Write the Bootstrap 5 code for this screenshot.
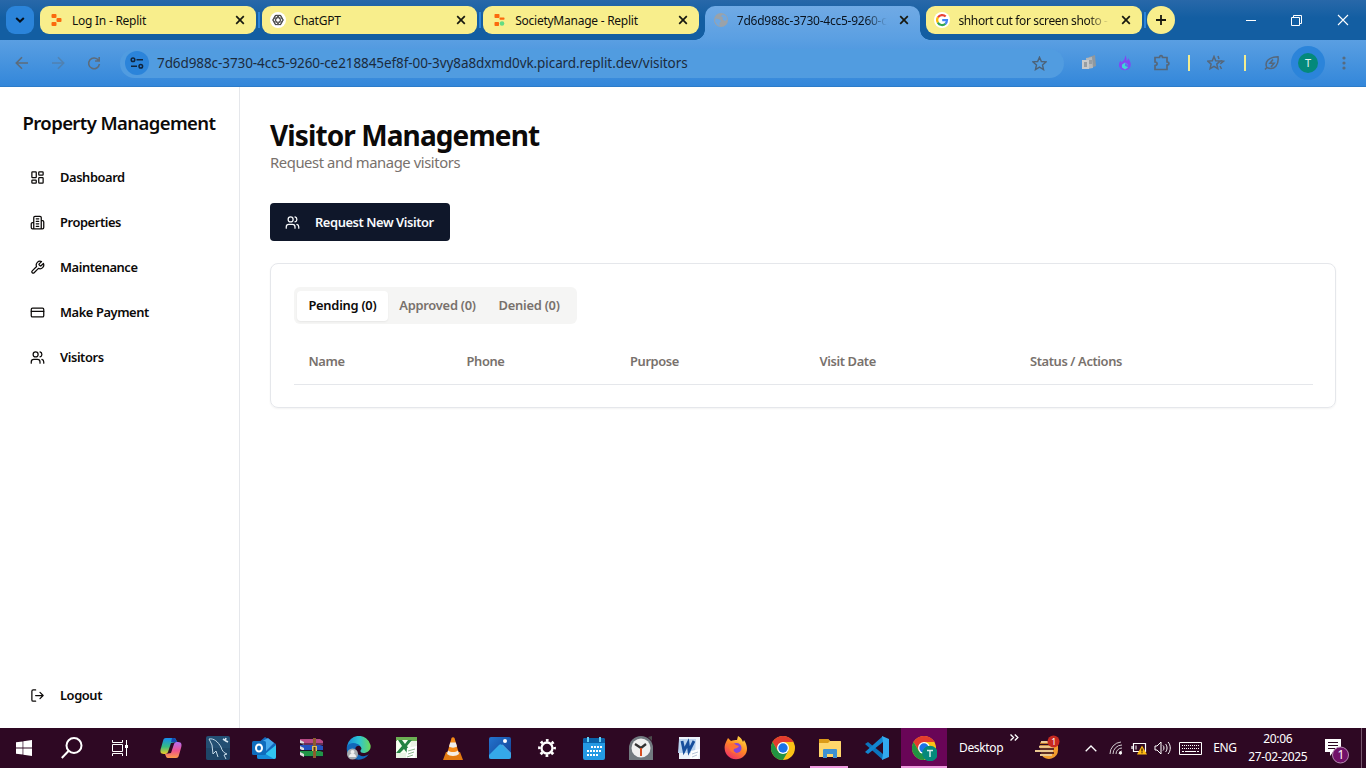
<!DOCTYPE html>
<html lang="en">
<head>
<meta charset="utf-8">
<meta name="viewport" content="width=device-width, initial-scale=1">
<title>Visitor Management</title>
<link href="https://cdn.jsdelivr.net/npm/bootstrap@5.3.0/dist/css/bootstrap.min.css" rel="stylesheet">
<style>
  body{font-family:"Noto Sans","Open Sans",sans-serif;color:#0c0a09;height:768px;overflow:hidden;font-size:13px;line-height:1.2}
  svg{display:block;flex:none}
  .lucide{width:15px;height:15px;fill:none;stroke:currentColor;stroke-width:2;stroke-linecap:round;stroke-linejoin:round}
  /* browser tab strip */
  .tabstrip{height:40px;padding:6px 0 0 6px;background:linear-gradient(#2868a9,#135ea2 18px);gap:6px;font-size:12px;letter-spacing:-.25px}
  .tabsearch{width:28px;height:28px;border-radius:9px;background:#2b84da}
  .pill-tab{width:215.6px;height:28px;border-radius:9px;background:#f8ee8c;color:#11110c;padding:0 11px 0 8px;position:relative;white-space:nowrap}
  .pill-tab.sep::after{content:"";position:absolute;right:-4px;top:6px;width:2px;height:16px;background:#2b84da}
  .pill-tab.current{height:34px;background:linear-gradient(#70aae5,#5a9fe2);border-radius:10px 10px 0 0;padding-bottom:6px;color:#0a1420}
  .pill-tab.current::before,.pill-tab.current::after{content:"";position:absolute;bottom:0;width:10px;height:10px}
  .pill-tab.current::before{left:-10px;background:radial-gradient(circle at 0 0,transparent 9.5px,#5a9fe2 10px)}
  .pill-tab.current::after{right:-10px;background:radial-gradient(circle at 100% 0,transparent 9.5px,#5a9fe2 10px)}
  .tab-label{flex:1;margin:1px 12px 0 8px;line-height:20px}
  .fade-label{-webkit-mask-image:linear-gradient(90deg,#000 86%,transparent)}
  .tight{letter-spacing:-.36px}
  .newtab{width:28px;height:28px;border-radius:50%;background:#f8ee8c;margin-left:-1px}
  .winctl{gap:35px;padding-right:17px;height:28px}
  /* address row */
  .toolbar{height:47px;background:linear-gradient(#5a9fe2,#3387da);border-bottom:1px solid #2d7cc9;color:#56677a}
  .omnibox{width:944px;height:29px;border-radius:15px;background:#519ce0;margin-left:18px;padding:0 17px 0 5px}
  .siteinfo{width:24px;height:24px;border-radius:50%;background:#2b84da}
  .url{font-size:13.5px;color:#1b2b3d;margin-left:8px;letter-spacing:-.085px}
  .ext-bar{width:2px;height:16px;background:#f3ec8f}
  .avatar-ring{width:34px;height:34px;border-radius:50%;background:#2b84da}
  .avatar-t{width:20px;height:20px;border-radius:50%;background:#04897b;color:#e5f5f2;font-size:11px}
  /* application */
  .app-view{height:641px;background:#fff}
  .side{width:240px;border-right:1px solid #e5e7eb;padding:22px 22px 14px}
  .brand{font-size:18.5px;font-weight:600;letter-spacing:-.6px;line-height:28px;white-space:nowrap;margin:0 0 22px .5px}
  .side .nav{gap:7.5px}
  .side .nav-link{height:37.5px;padding:0 7.5px;gap:15.5px;color:#0c0a09;font-size:12.9px;font-weight:600;letter-spacing:-.42px}
  .content-area{padding:30px}
  .page-title{font-size:28px;font-weight:700;letter-spacing:-.9px;line-height:34px;margin:1px 0 -1px}
  .muted{color:#78716c}
  .sub{font-size:14.8px;letter-spacing:-.42px;line-height:22px}
  .btn-request{background:#0f172a;color:#f8fafc;width:180px;height:38px;border-radius:4px;margin-top:30px;padding:0 14px;gap:15px;font-size:12.9px;font-weight:600;letter-spacing:-.42px;white-space:nowrap;line-height:19px}
  .panel{margin-top:22px;height:145px;border:1px solid #e5e7eb;border-radius:8px;box-shadow:0 1px 2px rgba(0,0,0,.05);padding:23px 22px 0 23px}
  .seg{width:283px;height:37px;border-radius:6px;background:#f5f5f4;padding:3.5px 3px;font-size:12.9px;font-weight:600;letter-spacing:-.25px}
  .seg .nav-link{height:30px;padding:0 11.4px;color:#78716c;white-space:nowrap}
  .seg .nav-link.active{background:#fff;color:#0c0a09;border-radius:4px;box-shadow:0 1px 2px rgba(0,0,0,.06)}
  .vtable{table-layout:fixed;margin:15px 0 0;font-size:12.9px;letter-spacing:-.38px}
  .vtable th{height:45px;padding:1px 14.5px 0;vertical-align:middle;color:#78716c;font-weight:600;border-bottom:1px solid #e5e7eb}
  /* desktop taskbar */
  .taskbar{height:40px;background:#2e0823;color:#fff;font-size:12px;letter-spacing:-.35px;white-space:nowrap}
  .cell{width:47.1px;height:40px}
  .w48{width:48px}
  .running{position:relative}
  .running::after{content:"";position:absolute;left:4px;right:5px;bottom:0;height:2px;background:#ef9adf}
  .focused{background:#690557}
  .focused::after{left:0;right:0}
  .peek{width:5px;height:40px;border-left:1px solid #75566c}
</style>
</head>
<body class="d-flex flex-column">

<svg width="0" height="0" class="position-absolute" aria-hidden="true">
  <symbol id="users" viewBox="0 0 24 24"><path d="M16 21v-2a4 4 0 0 0-4-4H6a4 4 0 0 0-4 4v2"/><circle cx="9" cy="7" r="4"/><path d="M22 21v-2a4 4 0 0 0-3-3.87M16 3.13a4 4 0 0 1 0 7.75"/></symbol>
  <symbol id="close" viewBox="0 0 10 10"><path d="M1.200 1.200l7.600 7.600M8.800 1.200L1.200 8.800" stroke="#17180f" stroke-width="1.700"/></symbol>
  <symbol id="chrome" viewBox="0 0 24 24"><circle cx="12" cy="12" r="12" fill="#fbc116"/><path d="M12 6h10.400A12 12 0 0 0 1.600 6l5.200 9z" fill="#e33b2e"/><path d="M1.600 6A12 12 0 0 0 12 24l5.200-9-10.400 0z" fill="#229342"/><circle cx="12" cy="12" r="6" fill="#fff"/><circle cx="12" cy="12" r="4.700" fill="#1a73e8"/></symbol>
</svg>

<header class="tabstrip d-flex">
  <div class="tabsearch d-flex align-items-center justify-content-center"><svg width="10" height="6" viewBox="0 0 10 6"><path d="M1.200 1l3.800 3.600L8.800 1" fill="none" stroke="#06101c" stroke-width="2"/></svg></div>
  <div class="pill-tab sep d-flex align-items-center">
    <svg width="16" height="16" viewBox="0 0 16 16"><g fill="#fb6a0d"><rect x="3.500" y="2" width="5" height="4" rx="1"/><rect x="8.500" y="6" width="5" height="4" rx="1"/><rect x="3.500" y="10" width="5" height="4" rx="1"/></g></svg>
    <span class="tab-label">Log In - Replit</span><svg width="10" height="10"><use href="#close"/></svg>
  </div>
  <div class="pill-tab sep d-flex align-items-center">
    <svg width="16" height="16" viewBox="0 0 16 16"><circle cx="8" cy="8" r="8" fill="#fff"/><g fill="none" stroke="#444" stroke-width=".9"><ellipse cx="8" cy="8" rx="5.200" ry="2.200"/><ellipse cx="8" cy="8" rx="5.200" ry="2.200" transform="rotate(60 8 8)"/><ellipse cx="8" cy="8" rx="5.200" ry="2.200" transform="rotate(120 8 8)"/><circle cx="8" cy="8" r="4.800"/></g></svg>
    <span class="tab-label">ChatGPT</span><svg width="10" height="10"><use href="#close"/></svg>
  </div>
  <div class="pill-tab d-flex align-items-center">
    <svg width="16" height="16" viewBox="0 0 16 16"><g fill="#fb6a0d"><rect x="3.500" y="2" width="5" height="4" rx=".7"/><rect x="8.500" y="5.500" width="5" height="2.300" rx=".7"/><rect x="3.500" y="10" width="4.500" height="4" rx=".7"/></g><circle cx="11" cy="11.500" r="2.300" fill="#63dc83"/></svg>
    <span class="tab-label">SocietyManage - Replit</span><svg width="10" height="10"><use href="#close"/></svg>
  </div>
  <div class="pill-tab current d-flex align-items-center">
    <svg width="16" height="16" viewBox="0 0 16 16"><circle cx="8" cy="8" r="7" fill="#9aa2a9"/><path d="M2.500 6.500l4 .8 1.500 2-1.500 1.500v3.500L4 12.500 2 9.500zM9.500 2.500L8 4.500l2 1-.5 2L12 9l2.300-1.500L13 4z" fill="#6fa8e2"/></svg>
    <span class="tab-label fade-label">7d6d988c-3730-4cc5-9260-c</span><svg width="10" height="10"><use href="#close"/></svg>
  </div>
  <div class="pill-tab sep d-flex align-items-center">
    <svg width="16" height="16" viewBox="0 0 16 16"><circle cx="8" cy="8" r="8" fill="#fff"/><g fill="none" stroke-width="2.200"><path d="M3.900 5.500A5 5 0 0 1 11.700 4.500" stroke="#ea4335"/><path d="M3.900 10.700A5 5 0 0 1 3.900 5.400" stroke="#fbbc05"/><path d="M11.500 11.700A5 5 0 0 1 3.800 10.600" stroke="#34a853"/><path d="M8.200 8.100H13A5 5 0 0 1 11.300 11.900" stroke="#4285f4"/></g></svg>
    <span class="tab-label fade-label tight">shhort cut for screen shoto -</span><svg width="10" height="10"><use href="#close"/></svg>
  </div>
  <div class="newtab d-flex align-items-center justify-content-center"><svg width="12" height="12" viewBox="0 0 12 12"><path d="M6 1v10M1 6h10" stroke="#17180f" stroke-width="1.800"/></svg></div>
  <div class="winctl d-flex align-items-center ms-auto">
    <svg width="10" height="11"><path d="M0 5.500h10" stroke="#fff"/></svg>
    <svg width="11" height="11" viewBox="0 0 11 11" fill="none" stroke="#fff"><path d="M.5 2.500h8v8h-8zM2.500 2.500v-2h8v8h-2"/></svg>
    <svg width="12" height="12" viewBox="0 0 12 12"><path d="M1 1l10 10M11 1L1 11" stroke="#fff" stroke-width="1.100"/></svg>
  </div>
</header>

<div class="toolbar d-flex align-items-center">
  <svg width="102" height="16" viewBox="0 0 102 16" fill="none" stroke="#5d6c7b" stroke-width="1.600"><path d="M28 8H16.500M22 2.300L16.300 8 22 13.700"/><path d="M52 8h11.500M58 2.300L63.700 8 58 13.700" opacity=".45"/><path d="M98.500 5.300A5.400 5.400 0 1 0 99.400 9M99.200 2v4h-4.100"/></svg>
  <div class="omnibox d-flex align-items-center">
    <div class="siteinfo d-flex align-items-center justify-content-center"><svg width="14" height="14" viewBox="0 0 14 14" fill="none" stroke="#10243c" stroke-width="1.500"><circle cx="3" cy="3.700" r="1.800"/><path d="M6.500 3.700H13M1 10.300h6"/><circle cx="10.800" cy="10.300" r="1.800"/></svg></div>
    <span class="url">7d6d988c-3730-4cc5-9260-ce218845ef8f-00-3vy8a8dxmd0vk.picard.replit.dev/visitors</span>
    <svg class="ms-auto" width="15" height="15" viewBox="0 0 16 16"><path d="M8 1.300l2 4.600 5 .4-3.800 3.300 1.100 4.900L8 11.900l-4.300 2.600 1.100-4.900L1 6.300l5-.4z" fill="none" stroke="#4c6278" stroke-width="1.500"/></svg>
  </div>
  <svg width="17" height="16" viewBox="-2 0 17 16" style="margin-left:17px"><path d="M6 2l6-2 1 11-5 2z" fill="#8f989f"/><path d="M3 3l6-1 1 11-6 1z" fill="#b4b8bb"/><path d="M-1 5h7v9h-7z" fill="#c8cacb"/><path d="M1 7h3v5H1zM6 5h3v4H6z" fill="#979ea3"/></svg>
  <svg width="14" height="16" viewBox="0 0 16 18" style="margin-left:20px"><path d="M8 0c2 3 2 5 1.500 6.500C11 6 11.500 4.500 11.500 3.500 15 8 15.500 12 13 15c-2.500 3-8 3-10.500 0C0 12 1.500 8 3 6l1 2.500C7 6 8.500 3 8 0z" fill="#8148f2"/><path d="M4.500 11L8 8.500l3.500 2.500v3L8 16.500 4.500 14z" fill="#41d5d7"/><path d="M8 9l3.500 2v3L8 12z" fill="#5c72ef"/></svg>
  <svg width="18" height="18" viewBox="0 0 18 18" style="margin-left:21px" fill="none" stroke="#56677a" stroke-width="1.700"><path d="M2 3.500h4.500c0-2.500 3-2.500 3 0H14v4.500c2.500 0 2.500 3 0 3v4.500H2V11.500c2.800-.3 2.800-3.200 0-3.500z"/></svg>
  <div class="ext-bar" style="margin-left:17px"></div>
  <svg width="18" height="16" viewBox="0 0 18 16" style="margin-left:17px" fill="none" stroke="#56677a" stroke-width="1.500"><path d="M7 1.500l1.700 4.200 4.500.4-3.400 3 1 4.600L7 11.300l-3.900 2.400 1-4.600-3.400-3 4.600-.4z"/><path d="M11 1l1 3M13.500 5.800l3 .4-3.200 2.600M13 11l1.500 3"/></svg>
  <div class="ext-bar" style="margin-left:19px"></div>
  <svg width="16" height="16" viewBox="0 0 16 16" style="margin-left:18px" fill="none" stroke="#56677a" stroke-width="1.500"><path d="M1 14.500l1.800-2C.5 7 4 2 14 1.800 15 9 11 16 2.800 12.500"/><path d="M9 4.500L6 8.300h4L7 12" stroke-width="1.600"/></svg>
  <div class="avatar-ring d-flex align-items-center justify-content-center" style="margin-left:11px"><div class="avatar-t d-flex align-items-center justify-content-center">T</div></div>
  <svg width="4" height="16" viewBox="0 0 4 16" fill="#566b80" style="margin-left:17px"><circle cx="2" cy="3" r="1.600"/><circle cx="2" cy="8" r="1.600"/><circle cx="2" cy="13" r="1.600"/></svg>
</div>

<div class="app-view d-flex">
  <aside class="side d-flex flex-column flex-shrink-0">
    <h1 class="brand">Property Management</h1>
    <nav class="nav flex-column">
      <a class="nav-link d-flex align-items-center"><svg class="lucide" viewBox="0 0 24 24"><rect x="3" y="3" width="7" height="9" rx="1"/><rect x="14" y="3" width="7" height="5" rx="1"/><rect x="14" y="12" width="7" height="9" rx="1"/><rect x="3" y="16" width="7" height="5" rx="1"/></svg>Dashboard</a>
      <a class="nav-link d-flex align-items-center"><svg class="lucide" viewBox="0 0 24 24"><path d="M6 22V4a2 2 0 0 1 2-2h8a2 2 0 0 1 2 2v18ZM6 12H4a2 2 0 0 0-2 2v6a2 2 0 0 0 2 2h2M18 9h2a2 2 0 0 1 2 2v9a2 2 0 0 1-2 2h-2M10 6h4M10 10h4M10 14h4M10 18h4"/></svg>Properties</a>
      <a class="nav-link d-flex align-items-center"><svg class="lucide" viewBox="0 0 24 24"><path d="M14.700 6.300a1 1 0 0 0 0 1.400l1.600 1.600a1 1 0 0 0 1.400 0l3.770-3.770a6 6 0 0 1-7.940 7.940l-6.910 6.910a2.120 2.120 0 0 1-3-3l6.910-6.910a6 6 0 0 1 7.940-7.940l-3.760 3.760z"/></svg>Maintenance</a>
      <a class="nav-link d-flex align-items-center"><svg class="lucide" viewBox="0 0 24 24"><rect x="2" y="5" width="20" height="14" rx="2"/><path d="M2 10h20"/></svg>Make Payment</a>
      <a class="nav-link d-flex align-items-center"><svg class="lucide"><use href="#users"/></svg>Visitors</a>
    </nav>
    <nav class="nav flex-column mt-auto">
      <a class="nav-link d-flex align-items-center"><svg class="lucide" viewBox="0 0 24 24"><path d="M9 21H5a2 2 0 0 1-2-2V5a2 2 0 0 1 2-2h4M16 17l5-5-5-5M21 12H9"/></svg>Logout</a>
    </nav>
  </aside>
  <main class="content-area flex-grow-1">
    <h2 class="page-title">Visitor Management</h2>
    <p class="sub muted mb-0">Request and manage visitors</p>
    <button class="btn btn-request d-flex align-items-center"><svg class="lucide"><use href="#users"/></svg>Request New Visitor</button>
    <section class="panel">
      <div class="seg nav flex-nowrap">
        <a class="nav-link active d-flex align-items-center">Pending (0)</a>
        <a class="nav-link d-flex align-items-center">Approved (0)</a>
        <a class="nav-link d-flex align-items-center">Denied (0)</a>
      </div>
      <table class="vtable w-100">
        <colgroup><col style="width:158px"><col style="width:163.5px"><col style="width:189.5px"><col style="width:210.5px"><col></colgroup>
        <thead><tr><th>Name</th><th>Phone</th><th>Purpose</th><th>Visit Date</th><th>Status / Actions</th></tr></thead>
      </table>
    </section>
  </main>
</div>

<footer class="taskbar d-flex align-items-center">
  <div class="cell w48 d-flex align-items-center justify-content-center"><svg width="16" height="16" viewBox="0 0 16 16" fill="#fff"><path d="M0 2.300l6.600-.9v6.200H0zM7.300 1.300L16 0v7.600H7.300zM0 8.400h6.600v6.200L0 13.700zM7.300 8.400H16V16l-8.700-1.300z"/></svg></div>
  <div class="cell w48 d-flex align-items-center justify-content-center"><svg width="22" height="22" viewBox="0 0 22 22" fill="none" stroke="#fff" stroke-width="2"><circle cx="13" cy="8.500" r="7.500"/><path d="M7.500 14L.8 21"/></svg></div>
  <div class="cell w48 d-flex align-items-center justify-content-center"><svg width="16" height="16" viewBox="0 0 16 16" fill="none" stroke="#fff"><path d="M.5 0v2.500h10V0M.5 4.500h10v7H.5zM.5 16v-2.500h10V16M14.500 0v16"/><path d="M13 5h3v3h-3z" fill="#fff" stroke="none"/></svg></div>
  <div class="cell d-flex align-items-center justify-content-center" style="margin-left:3px">
    <svg width="22" height="22" viewBox="0 0 22 22"><defs><linearGradient id="ca" x2="0" y2="1"><stop stop-color="#168df0"/><stop offset=".55" stop-color="#36bd80"/><stop offset="1" stop-color="#f1cb26"/></linearGradient><linearGradient id="cb" x2="0" y2="1"><stop stop-color="#b36cf3"/><stop offset=".55" stop-color="#ef548b"/><stop offset="1" stop-color="#fc9d47"/></linearGradient></defs><path d="M6 1h8c2 0 2 2 3 4l-6 1-3 9c-1 2-2 2-4 2-4 0-4-3-3-6L3 4c.5-2 1-3 3-3z" fill="url(#ca)"/><path d="M12 1h2c2 0 2 4 4 4h-7z" fill="#1249b1"/><path d="M16 21H8c-2 0-2-2-3-4l6-1 3-9c1-2 2-2 4-2 4 0 4 3 3 6l-2 7c-.5 2-1 3-3 3z" fill="url(#cb)"/></svg></div>
  <div class="cell d-flex align-items-center justify-content-center">
    <svg width="24" height="24" viewBox="0 0 24 24"><rect width="24" height="24" rx="2" fill="#234f73"/><path d="M0 12h24v10a2 2 0 0 1-2 2H2a2 2 0 0 1-2-2z" fill="#1b4161" opacity=".6"/><path d="M3 3c5-1 9 3 12 8 1 4 3 6 6 7l-3 1 2 4M3 3l3 6 1 9 3-3 2 6" fill="none" stroke="#c5dae8" stroke-width="1"/><path d="M17 3l3 2 2 1M20 2l-1 3" stroke="#d9e8f2" stroke-width="1.600"/></svg></div>
  <div class="cell d-flex align-items-center justify-content-center">
    <svg width="25" height="24" viewBox="0 0 25 24"><path d="M5 8l8-7 11 7v13a2 2 0 0 1-2 2H7a2 2 0 0 1-2-2z" fill="#1268bd"/><path d="M9 6l7-4 6 5-8 8z" fill="#45a9ed"/><path d="M24 9v12a2 2 0 0 1-2 2H7z" fill="#31c5f2"/><path d="M5 13l17 10H7a2 2 0 0 1-2-2z" fill="#168bda"/><rect y="5" width="14" height="14" rx="1.500" fill="#0f6cbd"/><ellipse cx="7" cy="12" rx="3" ry="3.600" fill="none" stroke="#fff" stroke-width="2"/></svg></div>
  <div class="cell d-flex align-items-center justify-content-center">
    <svg width="25" height="20" viewBox="0 0 25 20"><path d="M1 1h20l3 2v4H5L1 5z" fill="#b84a85"/><path d="M1 7h20l3 1v5H5l-4-2z" fill="#2452c0"/><path d="M1 13h20l3 1v4H5l-4-2z" fill="#219548"/><path d="M1 2l4 2v3L1 5zM1 8l4 2v3l-4-2zM1 14l4 2v3l-4-2z" fill="#ddd"/><path d="M1 6h23M1 12.500h23M5 18.500h19" stroke="#171729"/><path d="M14 0h3v20h-3z" fill="#8b5c2f"/><path d="M13 8h5v5h-5z" fill="#e3c05c"/><path d="M14.500 9h2v4h-2z" fill="#55351b"/></svg></div>
  <div class="cell d-flex align-items-center justify-content-center">
    <svg width="25" height="24" viewBox="0 0 25 24"><defs><linearGradient id="edge"><stop stop-color="#188cd9"/><stop offset=".5" stop-color="#2cc3d5"/><stop offset="1" stop-color="#6cda58"/></linearGradient></defs><path d="M1 10A12 12 0 0 1 24.500 9c1 5-3 8-7 8-3 0-4-2-2-4 0-4-8-7-14-3z" fill="url(#edge)"/><path d="M1 10c4-5 11-3 13 0-5-1-6 4-3 7 3 4 8 4 12 1-4 6-11 7-17 4-4-2-6-7-5-12z" fill="#1268ba"/><circle cx="6.500" cy="18" r="5.500" fill="#a7adb2"/><circle cx="6.500" cy="16" r="2" fill="#eee"/><path d="M3 21a3.500 3.500 0 0 1 7 0z" fill="#eee"/></svg></div>
  <div class="cell d-flex align-items-center justify-content-center">
    <svg width="23" height="22" viewBox="0 0 23 22"><path d="M1 0h21v21H1z" fill="#e9f2e4"/><path d="M1 0h21v4H1z" fill="#6caf53"/><path d="M2 3h14l-1 13H1z" fill="#f8fff2"/><path d="M3 3h4l3 4 3-4h4l-5 6 4 7h-4l-3-4-4 4H1l6-7z" fill="#248343"/><path d="M12 11l10-2-2 12h-9z" fill="#fff"/><path d="M13 14l7-2M13 17l6-2M12 20l6-2" stroke="#8fb990"/></svg></div>
  <div class="cell d-flex align-items-center justify-content-center">
    <svg width="20" height="23" viewBox="0 0 20 23"><path d="M3 15h14l3 8H0z" fill="#e37b12"/><path d="M8.500 1c.5-1 2.500-1 3 0L16 17c-2 3-10 3-12 0z" fill="#f58a18"/><path d="M7.200 5.500h5.600l1.200 4c-2 1.500-6 1.500-8 0z" fill="#eee"/><path d="M5 13.500c3 2 7 2 10 0l1 3.500c-3 2.500-9 2.500-12 0z" fill="#f5eee5"/></svg></div>
  <div class="cell d-flex align-items-center justify-content-center">
    <svg width="22" height="22" viewBox="0 0 22 22"><defs><linearGradient id="ph" x2="1" y2="1"><stop stop-color="#2374cf"/><stop offset="1" stop-color="#123f91"/></linearGradient></defs><rect width="22" height="22" rx="2" fill="url(#ph)"/><path d="M0 18L10 8c1-1 2-1 3 0l9 9v3a2 2 0 0 1-2 2H2a2 2 0 0 1-2-2z" fill="#35a8e8"/><path d="M13 8l9 9v-1L13.500 7.500z" fill="#68c9f5"/><circle cx="16" cy="4" r="2" fill="#fff"/></svg></div>
  <div class="cell d-flex align-items-center justify-content-center">
    <svg width="18" height="18" viewBox="0 0 18 18" fill="none" stroke="#fff"><circle cx="9" cy="9" r="5.500" stroke-width="2.300"/><circle cx="9" cy="9" r="7.600" stroke-width="2.600" stroke-dasharray="2.700 3.270" stroke-dashoffset="1.350"/></svg></div>
  <div class="cell d-flex align-items-center justify-content-center">
    <svg width="22" height="23" viewBox="0 0 22 23"><rect y="1" width="22" height="22" rx="2" fill="#2499e3"/><path d="M0 3c0-1 1-2 2-2h18c1 0 2 1 2 2v3H0z" fill="#0962a9"/><path d="M5 0v5M17 0v5" stroke="#66d0f6" stroke-width="2"/><path d="M8 10h11M4 14h15M4 18h11" stroke="#fff" stroke-width="2" stroke-dasharray="2 1"/></svg></div>
  <div class="cell d-flex align-items-center justify-content-center">
    <svg width="24" height="24" viewBox="0 0 24 24"><path d="M19 1l4-1v5z" fill="#4c4c4c"/><path d="M0 12a12 12 0 0 1 24 0v12H0z" fill="#727a80"/><circle cx="12" cy="12" r="9.500" fill="#f0f0f0"/><path d="M6 8l6 4 5-4" fill="none" stroke="#333" stroke-width="2.300"/><path d="M12 12v8" stroke="#d84d21" stroke-width="2"/></svg></div>
  <div class="cell d-flex align-items-center justify-content-center">
    <svg width="22" height="22" viewBox="0 0 22 22"><path d="M1 0h21v22H1z" fill="#edf3fa"/><path d="M1 2h17l-1 14H0z" fill="#b9d3ef"/><path d="M4 4l2 10 4-8 1 8 5-10" fill="none" stroke="#164e9c" stroke-width="2.800"/><path d="M13 14l9-2-2 10h-8z" fill="#fff"/><path d="M14 17l6-2M14 20l5-2" stroke="#b7c5d7"/></svg></div>
  <div class="cell d-flex align-items-center justify-content-center">
    <svg width="24" height="24" viewBox="0 0 24 24"><defs><linearGradient id="ff" x1=".8" y1="0" x2=".2" y2="1"><stop stop-color="#ffe044"/><stop offset=".45" stop-color="#ff8a24"/><stop offset="1" stop-color="#ef286b"/></linearGradient></defs><path d="M2 6l2-4 3 3c2-1 4-1 6-1l1-4c2 1 4 3 5 6l1-2c4 6 4 12 0 16-5 5-13 4-17-1-3-4-3-9-1-13z" fill="url(#ff)"/><circle cx="12.500" cy="12" r="5" fill="#8445dd"/><path d="M5 8c3-1 5-1 7 1l3 1c-1 2-3 2-5 3-1 1 0 3 2 4-4 0-6-2-7-5z" fill="#ff7034"/></svg></div>
  <div class="cell d-flex align-items-center justify-content-center"><svg width="24" height="24"><use href="#chrome"/></svg></div>
  <div class="cell running d-flex align-items-center justify-content-center">
    <svg width="22" height="19" viewBox="0 0 22 19"><path d="M0 1c0-1 0-1 1-1h8l2 2h10c1 0 1 0 1 1v15H0z" fill="#ffd66b"/><path d="M0 0h9l2 2-2 2H0z" fill="#dc9b18"/><path d="M4 19v-8c0-1 1-1 1-1h12c1 0 1 1 1 1v8h-4v-4H8v4z" fill="#3e91d3"/></svg></div>
  <div class="cell d-flex align-items-center justify-content-center">
    <svg width="24" height="24" viewBox="0 0 24 24"><path d="M0 8l3-2 15 12v6z" fill="#0b75be"/><path d="M0 16l3 2L18 6V0z" fill="#1286d0"/><path d="M17 0l7 3v18l-7 3 1-6V6z" fill="#32a9ef"/></svg></div>
  <div class="cell running focused d-flex align-items-center justify-content-center" style="width:46px"><svg width="26" height="26" viewBox="-1 0 26 26"><use href="#chrome" y="1" width="24" height="24"/><circle cx="18" cy="18.500" r="7.800" fill="#04897b"/><path d="M15 15.500h6M18 15.500V22" stroke="#d4eeea" stroke-width="1.500"/></svg></div>
  <span style="margin-left:12.5px">Desktop</span>
  <svg width="9" height="7" viewBox="0 0 9 7" class="align-self-start" style="margin:6px 0 0 7px" fill="none" stroke="#fff" stroke-width="1.400"><path d="M.5.500l3 3-3 3M4.800.500l3 3-3 3"/></svg>
  <svg width="26" height="26" viewBox="0 0 26 26" style="margin:0 0 3px 16px"><path d="M5 15h18a9 9 0 0 1-17 5z" fill="#f19c2d"/><path d="M5 8.500h18v7H5z" fill="#f19c2d"/><path d="M3 10.500h17M1 15h18M4 19h15" stroke="#2e0823" stroke-width="1.300"/><path d="M6 8h10M4 12.700h15M0 17h18M5 21h12" stroke="#ebc891" stroke-width="1.900"/><circle cx="18.500" cy="7.500" r="6" fill="#c82920"/><text x="16.300" y="11" fill="#fff" font-size="9">1</text></svg>
  <svg width="12" height="7" viewBox="0 0 12 7" style="margin-left:24px" fill="none" stroke="#fff" stroke-width="1.300"><path d="M.7 6.300L6 1l5.300 5.300"/></svg>
  <svg width="14" height="14" viewBox="0 0 14 14" style="margin-left:12px" fill="none" stroke="#eee"><path d="M1 13A12 12 0 0 1 12 1M4 13a9 9 0 0 1 9-9M7 13a6 6 0 0 1 6-6M10 13a3 3 0 0 1 3-3" opacity=".85"/><circle cx="11.500" cy="12" r="1.200" fill="#fff"/></svg>
  <svg width="17" height="14" viewBox="0 0 17 14" style="margin-left:8px"><path d="M2.500 2.500h12v8h-12zM1 5v3" fill="none" stroke="#fff" stroke-width="1.200"/><path d="M5 4.500v4" stroke="#fff"/><path d="M11 4.500l5 9H6z" fill="#fcb813"/><path d="M11 7.500v3M11 11.200v1" stroke="#37210a" stroke-width="1.300"/></svg>
  <svg width="17" height="14" viewBox="0 0 17 14" style="margin-left:6px" fill="none" stroke="#fff"><path d="M1 5h2l4-4v12L3 9H1zM9 4.500c1.300 1 1.300 4 0 5M11.500 3c2 2 2 6 0 8M14 1c3 3 3 9 0 12"/></svg>
  <svg width="23" height="13" viewBox="0 0 23 13" style="margin-left:8px" fill="none" stroke="#fff"><path d="M.5.500h22v12H.5z"/><path d="M3 3.500h17M3 6.500h17" stroke-dasharray="1 1"/><path d="M3 9.500h2M6 9.500h11M18 9.500h2"/></svg>
  <span style="margin-left:11px">ENG</span>
  <div class="text-center" style="width:62px;margin-left:10px;line-height:18px">20:06<br>27-02-2025</div>
  <svg width="26" height="26" viewBox="0 0 26 26" style="margin:5px 0 0 15px"><path d="M1 1h16v13H9l-3 4v-4H1z" fill="#fff"/><path d="M4 4.500h10M4 7.500h10M4 10.500h7" stroke="#2e0823"/><circle cx="16.500" cy="17" r="8" fill="#711168" stroke="#b58bb2"/><text x="13.500" y="21.300" font-size="12" fill="#fff">1</text></svg>
  <div class="peek ms-auto"></div>
</footer>

<script src="https://cdn.jsdelivr.net/npm/bootstrap@5.3.0/dist/js/bootstrap.bundle.min.js"></script>
</body>
</html>
